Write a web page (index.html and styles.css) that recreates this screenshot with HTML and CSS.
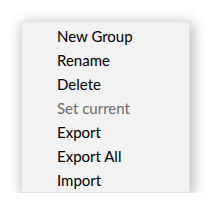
FILE: index.html
```html
<!doctype html>
<html lang="en">
<head>
    <meta charset="UTF-8">
    <title>Context menu</title>
    <link rel="stylesheet" href="styles.css">
</head>
<body>
    <ul class="menu">
        <li class="item">New Group</li>
        <li class="item">Rename</li>
        <li class="item">Delete</li>
        <li class="item disabled">Set current</li>
        <li class="item">Export</li>
        <li class="item">Export All</li>
        <li class="item">Import</li>
    </ul>
</body>
</html>
```

FILE: styles.css
```css
body {
    margin: 0;
    background: #fff;
    font-family: Lato, "Open Sans", sans-serif;
}

.menu {
    box-sizing: border-box;
    width: 169px;
    height: 172px;
    margin: 21px 0 0 21px;
    padding: 2px 0;
    list-style: none;
    border: 1px solid #e3e3e3;
    background: #f2f2f2;
    box-shadow: 2px 3px 14px rgba(0, 0, 0, .32);
}

.item {
    height: 24px;
    padding-left: 35px;
    font-size: 15px;
    line-height: 24px;
    color: #000;
}

.disabled {
    color: #6d6d6d;
}
```
